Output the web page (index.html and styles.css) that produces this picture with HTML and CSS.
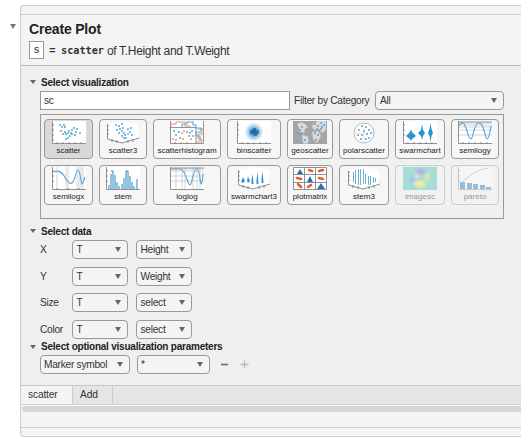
FILE: index.html
```
<!DOCTYPE html>
<html lang="en">
<head>
<meta charset="utf-8">
<title>Create Plot</title>
<link rel="stylesheet" href="styles.css">
</head>
<body>
<div class="page">
<span class="caret caret-outer"></span>
<main class="panel">
  <div class="strip"></div>
  <header class="header">
    <h1>Create Plot</h1>
    <div class="summary"><span class="var">s</span><code class="eq">=</code><code class="fn">scatter</code><span class="desc">of T.Height and T.Weight</span></div>
  </header>
  <div class="body">
    <h2><span class="caret"></span>Select visualization</h2>
    <div class="filter">
      <div class="search">sc</div>
      <span class="filter-label">Filter by Category</span>
      <div class="select w-filter"><span>All</span><i class="arrow"></i></div>
    </div>
    <div class="gallery">
      <div class="tile selected">
        <svg viewBox="0 0 34 23"><rect class="bg" width="34" height="23"/><path class="axis" d="M.5 0V22.5H34M0 4h2M0 9h2M0 14h2M0 19h2M5 21v2M11 21v2M17 21v2M23 21v2M29 21v2"/><path class="dots" d="M8 4h0M10 6h0M12 4h0M13 6h0M9 10h0M11 13h0M13 11h0M14 13h0M16 12h0M17 10h0M20 9h0M19 12h0M18 15h0M16 17h0M14 18h0M20 13h0M23 14h0M22 7h0M25 8h0M28 12h0M24 11h0"/></svg>
        <span>scatter</span></div>
      <div class="tile">
        <svg viewBox="0 0 34 23"><path class="bg" d="M2 3L16 0L32 3V17L16 22L2 17z"/><path class="axis" d="M1.5 3V18L16 22L33 17M1 5h2M1 9h2M1 13h2M6 18v3M11 19v3M22 19v3M27 18v3"/><path class="dots" d="M10 4h0M13 5h0M16 3h0M17 7h0M11 9h0M13 12h0M16 10h0M18 12h0M19 14h0M22 8h0M25 7h0M24 11h0M20 17h0M16 15h0M26 14h0M22 13h0M14 8h0M18 17h0"/></svg>
        <span>scatter3</span></div>
      <div class="tile">
        <svg viewBox="0 0 34 23"><rect class="bg" width="34" height="23"/><path class="axis" d="M.5 0V22.5H33.5V0M0 6.500H26V23M5 21v2M11 21v2M17 21v2"/><path class="orange" d="M1 6V3H6V1H15V5H20V7M28 8H33V13H28V18H32V21H26"/><path class="blue" d="M12 6V3H17V1H23V4H26V7H31V11H26V15H30V20"/><path class="dots" d="M4 10h0M6 14h0M9 11h0M10 17h0M17 11h0M20 12h0M19 15h0M22 10h0"/><path class="dots dots-orange" d="M3 18h0M6 19h0M13 18h0M14 10h0M21 18h0M23 15h0M12 12h0"/></svg>
        <span>scatterhistogram</span></div>
      <div class="tile">
        <svg viewBox="0 0 34 23"><defs><radialGradient id="density"><stop offset="0" stop-color="#0b5595"/><stop offset=".3" stop-color="#4a92c8"/><stop offset=".6" stop-color="#a8cce6"/><stop offset="1" stop-color="#fff"/></radialGradient></defs><rect class="bg" width="34" height="23"/><circle cx="17" cy="11" r="9.500" fill="url(#density)"/><path fill="#1866a7" fill-opacity=".7" d="M13 9h3V7h3v2h3v4h-2v2h-3v-2h-4z"/><path class="axis" d="M.5 0V22.5H34M0 4h2M0 9h2M0 14h2M5 21v2M11 21v2M17 21v2M23 21v2M29 21v2"/></svg>
        <span>binscatter</span></div>
      <div class="tile">
        <svg viewBox="0 0 34 23"><rect width="34" height="23" fill="#a5a5a5"/><path fill="#d9d9d9" d="M4 3l4-2 4 2 3 3-3 2-1 5-4-2-1-4zM9 14l5 1 3 3-3 5-4-1zM20 3l5-3h8v9l-4 3-3-4-5 1-2-3zM19 11l6-1 3 5-4 7-4-4z"/><path class="dots" d="M7 9h0M9 6h0M6 13h0M9 12h0M12 19h0M16 18h0M22 3h0M25 5h0M28 2h0M31 4h0M22 12h0M25 14h0M28 8h0M29 6h0M23 19h0M24 8h0"/></svg>
        <span>geoscatter</span></div>
      <div class="tile">
        <svg viewBox="0 0 34 23"><circle cx="17" cy="12" r="10" fill="#fff" stroke="#b6b6b6"/><path class="faint" d="M7 12H27M17 2V22"/><path class="dots" d="M15 5h0M19 6h0M12 9h0M17 10h0M22 9h0M24 12h0M20 13h0M11 14h0M15 14h0M14 18h0M19 18h0M22 17h0"/></svg>
        <span>polarscatter</span></div>
      <div class="tile">
        <svg viewBox="0 0 34 23"><rect class="bg" width="34" height="23"/><path class="axis" d="M.5 0V22.5H34M0 4h2M0 9h2M0 14h2M5 21v2M11 21v2M17 21v2M23 21v2M29 21v2"/><path class="solid" d="M8 8l1 3 4 4-4 3-1 2-1-2-4-3 4-4zM19 3l1 6 2 3-2 3-1 4-1-4-3-3 3-3zM27.500 2l1 6 1.500 4-1.500 3-1 6-1-6-1.500-3 1.500-4z"/></svg>
        <span>swarmchart</span></div>
      <div class="tile">
        <svg viewBox="0 0 34 23"><rect class="bg" width="34" height="23"/><path class="grid-lines" d="M0 2H34M0 4H34M0 6H34M0 9H34M0 14H34"/><path class="axis" d="M.5 0V22.5H34M0 1h34M5 21v2M11 21v2M17 21v2M23 21v2M29 21v2"/><path class="blue" d="M1 5C4 0 6 1 8 7C10 13 11 18 13 18C15 18 16 3 20 2C26 0 27 18 29 18C31 18 32 11 33 5"/></svg>
        <span>semilogy</span></div>
      <div class="tile">
        <svg viewBox="0 0 34 23"><rect class="bg" width="34" height="23"/><path class="grid-lines" d="M5 0V23M14 0V23M16 0V23M25 0V23M27 0V23M29 0V23M31 0V23"/><path class="axis" d="M.5 0V22.5H34M0 4h2M0 9h2M0 14h2M5 21v2M16 21v2M27 21v2"/><path class="blue" d="M1 5C7 2 11 6 14 12C17 17 20 18 22 13C24 7 25 3 26 3C28 3 29 16 30 17C31 17 32 13 33 10"/></svg>
        <span>semilogx</span></div>
      <div class="tile">
        <svg viewBox="0 0 34 23"><rect class="bg" width="34" height="23"/><path class="stems" d="M3 22v-4M5 22V7M7 22V4M9 22V8M11 22v-7M13 22v-3M16 22v-5M18 22V11M20 22V4M22 22V4M24 22V9M26 22v-7M28 22v-3M31 22V12"/><path class="dots" d="M6 4h0M21 4h0"/><path class="axis" d="M.5 0V22.5H34M0 4h2M0 9h2M0 14h2"/></svg>
        <span>stem</span></div>
      <div class="tile">
        <svg viewBox="0 0 34 23"><rect class="bg" width="34" height="23"/><path class="grid-lines" d="M0 2H34M0 4H34M0 9H34M0 14H34M6 0V23M12 0V23M15 0V23M23 0V23M27 0V23M30 0V23"/><path class="axis" d="M.5 0V22.5H34M0 1h34"/><path class="blue" d="M1 2H10C16 2 17 17 20 18C22 18 23 2 27 2C30 2 30 17 31 17C32 17 33 10 33 6"/></svg>
        <span>loglog</span></div>
      <div class="tile">
        <svg viewBox="0 0 34 23"><path class="bg" d="M2 3L16 0L32 3V17L16 22L2 17z"/><path class="axis" d="M1.500 3V18L16 22L33 17M1 5h2M1 9h2M1 13h2M6 18v3M11 19v3M22 19v3M27 18v3"/><path class="solid" d="M6 10l1 2 1 2-2 2-2-1 1-2zM11 9l1 3 1 2-2 2-1-2zM15.500 7l.7 6 .3 4h-2v-4zM20.500 5l.7 8 .3 4h-2v-4zM25.500 4l.7 8 .3 4h-2v-4z"/></svg>
        <span>swarmchart3</span></div>
      <div class="tile">
        <svg viewBox="0 0 34 23"><rect class="bg" width="34" height="23"/><path class="axis" d="M.5 .5H33.500V22.500H.5zM11.500 0V23M22.500 0V23M0 7.500H34M0 15.500H34"/><path class="solid dark" d="M4 7l3-5 3 5zM14 15l3-6 3 6zM24 22l4-6 4 6z"/><path class="blobs" d="M16 3l3 1M26 4l4-1M4 11l4 1M26 11l4 1M5 17l3 3M15 20l3-2"/></svg>
        <span>plotmatrix</span></div>
      <div class="tile">
        <svg viewBox="0 0 34 23"><path class="bg" d="M2 3L16 0L32 3V17L16 22L2 17z"/><path class="axis" d="M1.500 4V18L16 22L33 17M1 5h2M1 9h2M1 13h2M6 18v3M11 19v3M22 19v3M27 18v3"/><path class="stems thin" d="M6.500 5V15M8.500 3V17M11.500 2V18M13.500 2V18M16.500 2V17M18.500 7V17M21.500 9V18M23.500 9V18M26.500 10V16M28.500 11V15"/></svg>
        <span>stem3</span></div>
      <div class="tile disabled">
        <svg viewBox="0 0 34 23"><defs><filter id="soft"><feGaussianBlur stdDeviation="1.300"/></filter></defs><rect width="34" height="23" fill="#40c2b4"/><g filter="url(#soft)"><ellipse cx="18" cy="5" rx="5" ry="3" fill="#4963d8"/><ellipse cx="10" cy="13" rx="4" ry="4" fill="#3e92e0"/><ellipse cx="17" cy="17" rx="6" ry="3.500" fill="#f4e32e"/><ellipse cx="14" cy="9" rx="2.500" ry="2" fill="#e2d544"/><ellipse cx="24" cy="10" rx="3" ry="4" fill="#b9d359"/></g></svg>
        <span>imagesc</span></div>
      <div class="tile disabled">
        <svg viewBox="0 0 34 23"><rect class="bg" width="34" height="23"/><path class="solid dark" d="M2 22V15h5v7zM9 22v-6h5v6zM15 22v-5h5v5zM22 22v-4h5v4zM28 22v-2h5v2z"/><path class="orange" d="M4 15C12 9 17 3 30 1"/><path class="axis" d="M.5 0V22.5H34M0 4h2M0 9h2M0 14h2"/></svg>
        <span>pareto</span></div>
    </div>
    <h2 class="data-title"><span class="caret"></span>Select data</h2>
    <div class="rows">
      <div class="row"><label>X</label><div class="select w-table"><span>T</span><i class="arrow"></i></div><div class="select w-table"><span>Height</span><i class="arrow"></i></div></div>
      <div class="row"><label>Y</label><div class="select w-table"><span>T</span><i class="arrow"></i></div><div class="select w-table"><span>Weight</span><i class="arrow"></i></div></div>
      <div class="row"><label>Size</label><div class="select w-table"><span>T</span><i class="arrow"></i></div><div class="select w-table"><span>select</span><i class="arrow"></i></div></div>
      <div class="row"><label>Color</label><div class="select w-table"><span>T</span><i class="arrow"></i></div><div class="select w-table"><span>select</span><i class="arrow"></i></div></div>
    </div>
    <h2 class="params-title"><span class="caret"></span>Select optional visualization parameters</h2>
    <div class="params">
      <div class="select w-param"><span>Marker symbol</span><i class="arrow"></i></div>
      <div class="select w-value"><span>*</span><i class="arrow"></i></div>
      <svg class="op minus" viewBox="0 0 9 9"><path d="M1 4.500H8"/></svg>
      <svg class="op plus" viewBox="0 0 9 9"><path d="M.5 4.500H8.500M4.500 .5V8.500"/></svg>
    </div>
  </div>
  <nav class="tabs"><span class="tab active">scatter</span><span class="tab">Add</span></nav>
  <div class="scroll"><div class="thumb"></div></div>
  <footer class="footer"></footer>
</main>
</div>
</body>
</html>
```

FILE: styles.css
```
* { box-sizing: border-box; }
html, body { margin: 0; height: 447px; overflow: hidden; }
body { background: #fff; color: #333; font: 12px "Liberation Sans", Arial, sans-serif; }
.page { display: flex; height: 447px; padding-top: 5px; }
.caret { flex: none; width: 0; height: 0; border: solid transparent; border-width: 4px 3px 0; border-top-color: #666; }
.caret-outer { margin: 19px 4px 0 10px; border-width: 5px 3px 0; border-top-color: #777; }
.panel { flex: 1; height: 432px; border: 1px solid #ccc; border-right: 0; border-radius: 4px 0 0 4px; background: #f4f4f4; overflow: hidden; display: flex; flex-direction: column; }
.strip { height: 9px; border-bottom: 1px solid #ccc; }
.header { height: 51px; padding: 5px 0 0 8px; border-bottom: 1px solid #bbb; }
h1 { margin: 0; font-size: 14px; line-height: 18px; color: #222; letter-spacing: -.18px; }
.summary { display: flex; align-items: center; height: 18px; margin-top: 3px; white-space: nowrap; }
.var { width: 15px; height: 18px; border: 1px solid #999; background: #fff; font: 11px/16px "Liberation Mono", monospace; text-align: center; }
.eq, .fn { font: bold 11px "Liberation Mono", monospace; }
.eq { width: 7px; margin: 1px 5px 0 5px; }
.fn { font-family: "DejaVu Sans Mono", monospace; font-size: 10.2px; margin: 1px 3px 0 0; }
.desc { font-size: 12px; letter-spacing: -.32px; margin-top: 1px; }
.body { height: 319px; padding-left: 9px; background: #efefef; }
h2 { display: flex; align-items: center; gap: 5px; margin: 0; height: 14px; font-size: 10px; letter-spacing: -.23px; color: #222; white-space: nowrap; }
.body > h2:first-child { margin-top: 9px; }
.filter { display: flex; align-items: center; height: 19px; margin: 2px 0 0 10px; font-size: 10.2px; letter-spacing: -.28px; white-space: nowrap; }
.search { width: 250px; height: 19px; border: 1px solid #999; background: #fff; padding-left: 3px; line-height: 17px; }
.filter-label { width: 81px; margin-left: 4px; }
.select { display: flex; align-items: center; justify-content: space-between; height: 19px; padding: 0 5px 0 4px; border: 1px solid #999; border-radius: 4px; background: #f4f4f4; font-size: 10.2px; letter-spacing: -.28px; white-space: nowrap; }
.arrow { width: 0; height: 0; border: solid transparent; border-width: 5px 3px 0; border-top-color: #666; }
.w-filter { width: 129px; padding-right: 6px; }
.w-table { width: 56px; padding: 0 6px 0 3.5px; }
.w-param { width: 90px; padding: 0 6px 0 3px; }
.w-value { width: 73px; padding: 0 6px 0 3px; margin-left: 7px; }
.gallery { display: grid; grid-template-columns: 49px 48px 68px 54px 46px 50px 50px 48px; grid-auto-rows: 40px; gap: 6px; width: 464px; height: 105px; margin: 4px 0 0 10px; padding: 4px 3px; border: 1px solid #999; background: #f0f0f0; }
.tile { display: flex; flex-direction: column; align-items: center; border: 1px solid #999; border-radius: 4px; background: #f6f6f6; padding-top: 1px; font-size: 8px; line-height: 13px; color: #222; white-space: nowrap; min-width: 0; }
.tile svg { width: 34px; height: 23px; flex: none; }
.selected { background: #d9d9d9; }
.disabled { border-color: #ccc; background: #f1f1f1; color: #999; }
.disabled svg { opacity: .42; }
.bg { fill: #fff; }
.axis { fill: none; stroke: #777; stroke-width: .8; }
.grid-lines, .faint { fill: none; stroke: #bbb; stroke-width: .6; }
.faint { stroke: #ddd; }
.dots { fill: none; stroke: #50a1d4; stroke-width: 1.9; stroke-linecap: round; }
.dots-orange { stroke: #ed8b67; }
.orange { fill: none; stroke: #ed9270; stroke-width: 1; }
.blue { fill: none; stroke: #5faadb; stroke-width: 1.2; }
.solid { fill: #2994d1; }
.dark { fill: #1775b8; }
.stems { fill: none; stroke: #6cafd9; stroke-width: 1.5; }
.thin { stroke-width: 1; }
.blobs { fill: none; stroke: #df6236; stroke-width: 2.6; stroke-linecap: round; }
.data-title { margin-top: 5px; }
.rows { display: grid; grid-auto-rows: 19px; row-gap: 7.5px; margin: 2px 0 0 10px; }
.row { display: grid; grid-template-columns: 32px 56px 56px; align-items: center; font-size: 10.2px; letter-spacing: -.28px; }
.row .select:last-child { margin-left: 8px; }
.params-title { margin-top: 1px; }
.params { display: flex; align-items: center; margin: 1px 0 0 10px; }
.op { width: 9px; height: 9px; fill: none; stroke: #666; stroke-width: 1.3; }
.minus { margin-left: 10px; }
.plus { margin-left: 11px; stroke: #bbb; }
.tabs { display: flex; height: 20px; border-top: 1px solid #c9c9c9; border-bottom: 1px solid #d3d3d3; background: #e5e5e5; }
.tab { width: 40px; padding-left: 7px; border-right: 1px solid #ccc; font-size: 10.2px; letter-spacing: -.15px; line-height: 18px; }
.tab.active { width: 52px; background: #f4f4f4; }
.scroll { height: 22px; padding: 1px 0 0 1px; }
.thumb { height: 6px; border-radius: 3px 0 0 3px; background: #d6d6d6; }
.footer { flex: 1; border-top: 1px solid #d3d3d3; }
```
